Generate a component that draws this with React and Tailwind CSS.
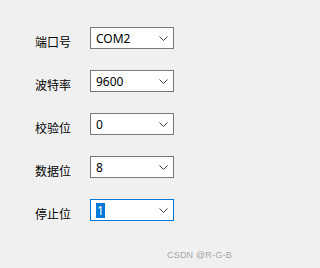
import React from "react";

const rows = [
  { label: "端口号", value: "COM2" },
  { label: "波特率", value: "9600" },
  { label: "校验位", value: "0" },
  { label: "数据位", value: "8" },
  { label: "停止位", value: "1", focused: true },
];

function Chevron() {
  return (
    <svg width="9" height="5" viewBox="0 0 9 5" className="shrink-0">
      <path d="M0.5 0.5 L4.5 4.5 L8.5 0.5" fill="none" stroke="#404040" strokeWidth="1" />
    </svg>
  );
}

export default function App() {
  return (
    <div
      className="w-full min-w-[250px] min-h-screen h-[268px] bg-[#f0f0f0] relative overflow-hidden"
      style={{ fontFamily: '"Noto Sans", "Noto Sans CJK SC", sans-serif' }}
    >
      <div className="flex flex-col gap-[20px] pt-[27px] pl-[35px]">
        {rows.map((r) => (
          <div key={r.label} className="flex items-start">
            <div
              className="w-[55px] text-[12px] leading-[16px] mt-[7px] text-black"
              style={{ fontFamily: '"Noto Sans CJK SC", sans-serif' }}
            >
              {r.label}
            </div>
            <div
              className={
                "w-[84px] h-[22px] bg-white border flex items-center pl-[5px] pr-[5px] justify-between " +
                (r.focused ? "border-[#0078d7]" : "border-[#7a7a7a]")
              }
            >
              {r.focused ? (
                <span className="text-[12px] leading-[15px] bg-[#0078d7] text-white px-[1px]">{r.value}</span>
              ) : (
                <span className="text-[12px] leading-[15px] text-black">{r.value}</span>
              )}
              <Chevron />
            </div>
          </div>
        ))}
      </div>
      <div
        className="absolute left-[167px] top-[249px] text-[9px] leading-[12px] text-[#a6a6a6] tracking-[0.2px]"
        style={{ fontFamily: '"Liberation Sans", sans-serif' }}
      >
        CSDN @R-G-B
      </div>
    </div>
  );
}
